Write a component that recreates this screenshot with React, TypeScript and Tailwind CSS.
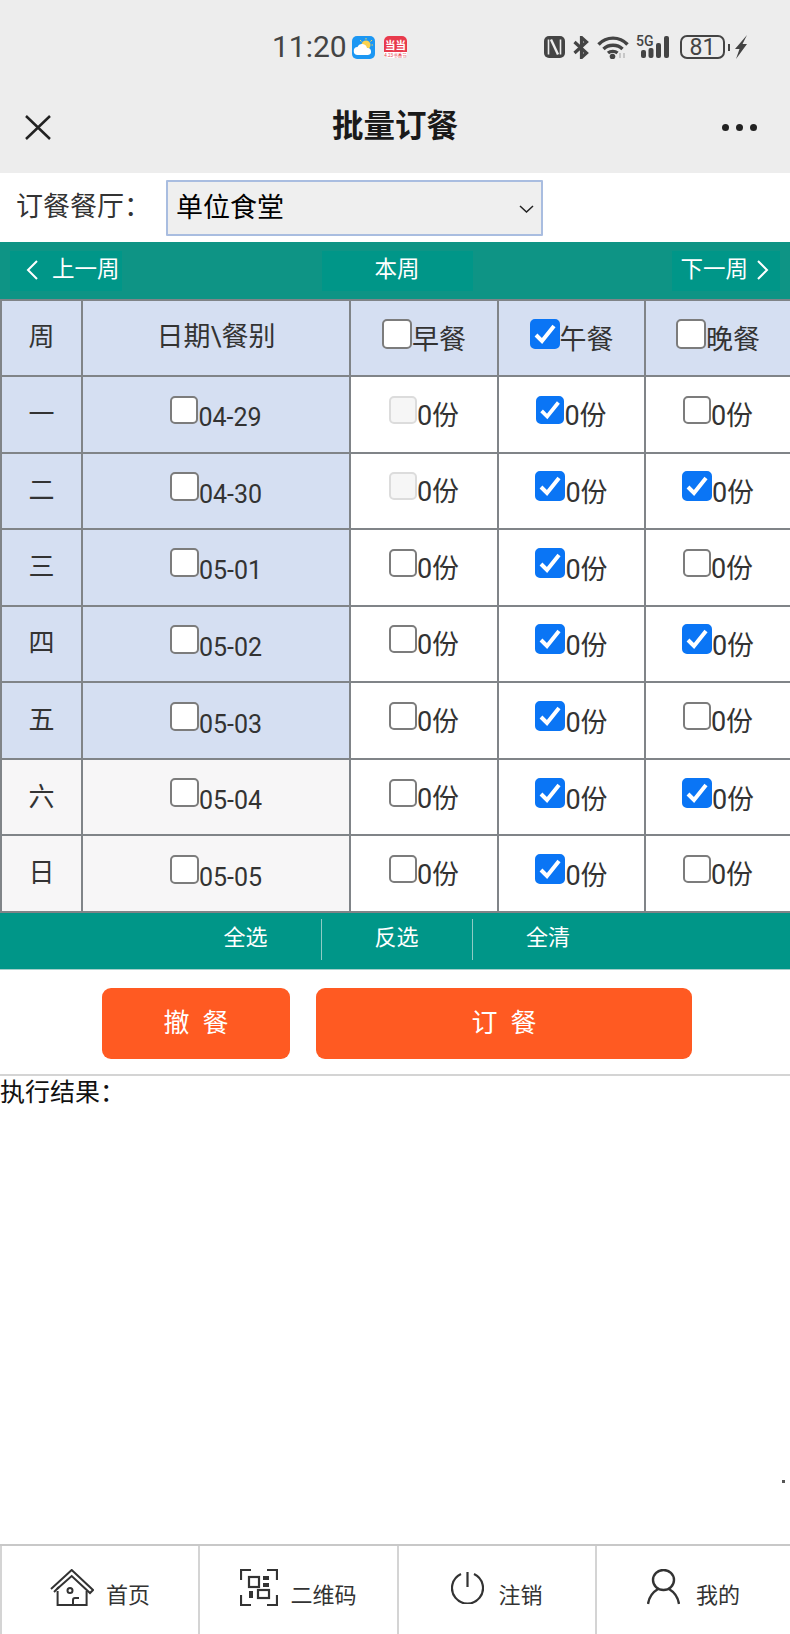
const days = [
  { week: "一", date: "04-29", tint: true, off: true, lunch: true, dinner: false },
  { week: "二", date: "04-30", tint: true, off: true, lunch: true, dinner: true },
  { week: "三", date: "05-01", tint: true, off: false, lunch: true, dinner: false },
  { week: "四", date: "05-02", tint: true, off: false, lunch: true, dinner: true },
  { week: "五", date: "05-03", tint: true, off: false, lunch: true, dinner: false },
  { week: "六", date: "05-04", tint: false, off: false, lunch: true, dinner: true },
  { week: "日", date: "05-05", tint: false, off: false, lunch: true, dinner: false },
];

// size is one of the three box sizes seen in the table
const Box = ({ checked = false, disabled = false, size = "h-[28px] w-[28px]" }: { checked?: boolean; disabled?: boolean; size?: string }) => (
  <span className={`relative mb-[9px] block shrink-0 ${size}`}>
    <input
      type="checkbox"
      checked={checked}
      disabled={disabled}
      readOnly
      className="block h-full w-full appearance-none rounded-[5px] border-2 border-[#7c7c7c] bg-white checked:border-[#0a75f5] checked:bg-[#0a75f5] disabled:border-[#dcdcdc] disabled:bg-[#f6f6f6]"
    />
    {checked && (
      <svg className="absolute inset-0 h-full w-full" viewBox="0 0 30 30" fill="none" stroke="#fff" strokeWidth="4">
        <path d="M6 16l6 6L24 7" />
      </svg>
    )}
  </span>
);

const MealCell = ({ checked = false, disabled = false, small = false }: { checked?: boolean; disabled?: boolean; small?: boolean }) => (
  <td className="border-2 border-[#808488] p-0">
    <div className="flex items-end justify-center text-[27px] leading-[34px] text-[#333]">
      <Box checked={checked} disabled={disabled} size={checked && !small ? "h-[30px] w-[30px]" : "h-[28px] w-[28px]"} />
      <span>0份</span>
    </div>
  </td>
);

const HeadMeal = ({ label, checked = false }: { label: string; checked?: boolean }) => (
  <th className="border-2 border-[#808488] p-0 font-normal">
    <div className="flex items-end justify-center text-[27px] leading-[34px] text-[#333]">
      <Box checked={checked} size="h-[30px] w-[30px]" />
      <span className="mb-[1px]">{label}</span>
    </div>
  </th>
);

const Chevron = ({ right = false }: { right?: boolean }) => (
  <svg width="13" height="20" viewBox="0 0 13 20" fill="none" stroke="#fff" strokeWidth="2">
    <path d={right ? "M2 1l9 9-9 9" : "M11 1l-9 9 9 9"} />
  </svg>
);

const StatusIcons = () => (
  <div className="ml-auto flex items-center pr-[43px] text-[#444]">
    {/* nfc */}
    <svg width="21" height="22" viewBox="0 0 21 22">
      <rect x="0" y="0" width="21" height="22" rx="5" fill="#444" />
      <path d="M4.500 3.500v15M16.500 3.500v15" stroke="#ededed" strokeWidth="1.600" fill="none" />
      <path d="M7 3.500l7 15" stroke="#ededed" strokeWidth="2.400" fill="none" />
    </svg>
    <svg className="ml-[8px]" width="16" height="23" viewBox="0 0 16 23" fill="none" stroke="#444" strokeWidth="3.200">
      <path d="M1.500 6l12 11-5 4.500V1.500l5 4.500-12 11" />
    </svg>
    <svg className="ml-[8px]" width="32" height="23" viewBox="0 0 32 23" fill="none" stroke="#444" strokeWidth="3.400">
      <path d="M1.500 8.500c8-8.500 21-8.500 29 0M6.500 13c5-5 14-5 19 0M11 17c2.500-2.200 7-2.200 9.500 0" />
      <circle cx="15.500" cy="20.500" r="2.800" fill="#444" stroke="none" />
      <path d="M23 17v5M27 17v5" stroke="#bbb" strokeWidth="1.500" />
    </svg>
    <div className="relative ml-[7px] h-[23px] w-[36px]">
      <span className="absolute left-0 top-[-2px] text-[14px] font-medium leading-[14px]">5G</span>
      <svg className="absolute left-[5px] top-0" width="31" height="23" viewBox="0 0 31 23" fill="#444">
        <rect x="0" y="14" width="5" height="8" rx="2" />
        <rect x="7.500" y="12" width="5" height="10" rx="2" />
        <rect x="15" y="7" width="5" height="15" rx="2" />
        <rect x="23" y="0" width="5" height="22" rx="2" />
      </svg>
    </div>
    <div className="ml-[8px] flex h-[24px] w-[45px] items-center justify-center rounded-[7px] border-2 border-[#444] text-[23px] leading-none">81</div>
    <div className="ml-[3px] h-[7px] w-[2px] bg-[#444]" />
    <svg className="ml-[5px]" width="12" height="24" viewBox="0 0 12 24" fill="#444">
      <path d="M12 0L0 14h4.500L1 24l11-15H7.500z" />
    </svg>
  </div>
);

const HomeIcon = () => (
  <svg width="44" height="37" viewBox="0 0 44 37" fill="none" stroke="#333" strokeWidth="2">
    <path d="M1 20L21.700 1 43 21l-3 3L21.700 7 7 20" />
    <path d="M4 23l5-5" />
    <path d="M7.600 22v14h29V22" />
    <circle cx="20" cy="21.500" r="2.500" />
    <path d="M23 36v-5q0-2 2-2h4" />
  </svg>
);

const QrIcon = () => (
  <svg width="38" height="37" viewBox="0 0 38 37" fill="none" stroke="#333" strokeWidth="2.200">
    <path d="M1 11V1h10M27 1h10v10M1 26v10h10M27 36h10V26" />
    <rect x="9" y="8" width="10" height="10" />
    <rect x="18" y="21" width="11" height="8" />
    <rect x="23" y="7" width="6" height="4" fill="#333" stroke="none" />
    <rect x="23" y="14" width="6" height="4" fill="#333" stroke="none" />
    <rect x="9" y="22" width="4" height="7" fill="#333" stroke="none" />
  </svg>
);

const PowerIcon = () => (
  <svg width="33" height="33" viewBox="0 0 33 33" fill="none" stroke="#333" strokeWidth="2.200">
    <path d="M10 3a15.500 15.500 0 1 0 13 0" />
    <path d="M16.500 1v15" />
  </svg>
);

const PersonIcon = () => (
  <svg width="33" height="36" viewBox="0 0 33 36" fill="none" stroke="#333" strokeWidth="2.400">
    <ellipse cx="16.500" cy="11" rx="10.500" ry="10" />
    <path d="M1 35c1-7 5-12 10-15M32 35c-1-7-5-12-10-15" />
  </svg>
);

const NavItem = ({ icon, label, className }: { icon: React.ReactNode; label: string; className: string }) => (
  <div className={`flex items-center justify-center border-[#d4d4d4] pb-[6px] ${className}`}>
    {icon}
    <span className="mt-[17px] text-[22px] leading-[26px] text-[#333]">{label}</span>
  </div>
);

export default function App() {
  return (
    <div className="flex h-[1634px] w-[790px] flex-col overflow-hidden bg-white font-['Roboto','Noto_Sans_CJK_SC',sans-serif]">
      <header className="h-[173px] bg-[#ededed]">
        <div className="flex h-[94px] items-center pl-[272px]">
          <span className="text-[30px] leading-none text-[#444]">11:20</span>
          <svg className="ml-[5px]" width="23" height="23" viewBox="0 0 23 23">
            <rect width="23" height="23" rx="5" fill="#1c97f3" />
            <circle cx="14" cy="9" r="4.500" fill="#fbd24e" />
            <path d="M14 2v1.500M20 4l-1.500 1.500M21 9h-1.500M8 4l1.500 1.500" stroke="#fbd24e" strokeWidth="1" />
            <path d="M6 19a4 4 0 0 1-.500-8 5 5 0 0 1 9.500 1 3.500 3.500 0 0 1 1 7z" fill="#fff" />
          </svg>
          <svg className="ml-[9px]" width="23" height="22" viewBox="0 0 23 22">
            <rect width="23" height="22" rx="5" fill="#fff" />
            <path d="M5 0h13a5 5 0 0 1 5 5v11H0V5a5 5 0 0 1 5-5z" fill="#e83a4c" />
            <text x="11.500" y="12.500" textAnchor="middle" fontSize="10.500" fontWeight="700" fill="#fff">当当</text>
            <text x="11.500" y="20.500" textAnchor="middle" fontSize="4.500" fill="#e83a4c">4.23书香节</text>
          </svg>
          <StatusIcons />
        </div>
        <div className="grid h-[66px] grid-cols-[1fr_auto_1fr] items-center px-[33px]">
          <svg className="ml-[-8px]" width="26" height="25" viewBox="0 0 26 25" fill="none" stroke="#222" strokeWidth="2.500">
            <path d="M1 1l24 23M25 1L1 24" />
          </svg>
          <h1 className="text-[31.5px] font-bold leading-none text-[#1a1a1a]">批量订餐</h1>
          <div className="flex justify-end gap-[7px]">
            <div className="h-[7px] w-[7px] rounded-full bg-[#222]" />
            <div className="h-[7px] w-[7px] rounded-full bg-[#222]" />
            <div className="h-[7px] w-[7px] rounded-full bg-[#222]" />
          </div>
        </div>
      </header>

      <div className="flex h-[69px] items-center pl-[16px]">
        <label className="w-[150px] text-[27px] leading-none text-[#333]">订餐餐厅：</label>
        <div className="relative">
          <select className="h-[56px] w-[377px] appearance-none rounded-[1px] border-2 border-[#a9bde0] bg-[#efefef] pl-[8px] pt-[2px] text-[27px] text-black">
            <option>单位食堂</option>
          </select>
          <svg className="absolute right-[9px] top-[25px]" width="15" height="8" viewBox="0 0 15 8" fill="none" stroke="#222" strokeWidth="1.500">
            <path d="M1 1l6.500 6L14 1" />
          </svg>
        </div>
      </div>

      <div className="flex h-[57px] items-center justify-between bg-[#0e9485] text-[22.5px] leading-none text-white">
        <button className="ml-[10px] flex h-[40px] w-[112px] items-center gap-[13px] bg-[#009688] pb-[2px] pl-[16px]">
          <Chevron />
          <span>上一周</span>
        </button>
        <button className="h-[40px] w-[151px] bg-[#009688] pb-[2px]">本周</button>
        <button className="mr-[10px] flex h-[40px] w-[108px] items-center justify-end gap-[8px] bg-[#009688] pb-[2px] pr-[11px]">
          <span>下一周</span>
          <Chevron right />
        </button>
      </div>

      <table className="h-[614px] w-[790px] table-fixed border-collapse text-center">
        <colgroup>
          <col className="w-[81px]" />
          <col className="w-[268px]" />
          <col className="w-[148px]" />
          <col className="w-[147px]" />
          <col className="w-[146px]" />
        </colgroup>
        <thead>
          <tr className="h-[76px] bg-[#d5dff2]">
            <th className="border-2 border-[#808488] p-0 pb-[2px] text-[26px] font-normal text-[#333]">周</th>
            <th className="border-2 border-[#808488] p-0 pb-[2px] text-[27px] font-normal text-[#333]">日期\餐别</th>
            <HeadMeal label="早餐" />
            <HeadMeal label="午餐" checked />
            <HeadMeal label="晚餐" />
          </tr>
        </thead>
        <tbody>
          {days.map((d, i) => (
            <tr key={d.date} className="h-[76px]">
              <td className={`border-2 border-[#808488] p-0 text-[26px] text-[#333] ${d.tint ? "bg-[#d5dff2]" : "bg-[#f7f6f7]"}`}>{d.week}</td>
              <td className={`border-2 border-[#808488] p-0 ${d.tint ? "bg-[#d5dff2]" : "bg-[#f7f6f7]"}`}>
                <div className="flex items-end justify-center text-[25px] leading-[30px] text-[#333]">
                  <Box size={i === 0 ? "h-[28px] w-[28px]" : "h-[29px] w-[29px]"} />
                  <span>{d.date}</span>
                </div>
              </td>
              <MealCell disabled={d.off} />
              <MealCell checked={d.lunch} small={i === 0} />
              <MealCell checked={d.dinner} />
            </tr>
          ))}
        </tbody>
      </table>

      <div className="flex h-[57px] items-center justify-center border-b border-[#a5cfca] bg-[#009688] pb-[4px] pl-[4px] text-[22px] text-white">
        <div className="flex h-[41px] w-[151px] items-center justify-center border-r border-[#8fcbc4] pb-[3px]">全选</div>
        <div className="flex h-[41px] w-[151px] items-center justify-center border-r border-[#8fcbc4] pb-[3px]">反选</div>
        <div className="flex h-[41px] w-[151px] items-center justify-center pb-[3px]">全清</div>
      </div>

      <div className="flex h-[106px] gap-[26px] border-b-2 border-[#d4d4d4] pl-[102px] pt-[18px]">
        <button className="flex h-[71px] w-[188px] items-center justify-center gap-[13px] rounded-[9px] bg-[#ff5a22] text-[26px] text-white">
          <span>撤</span>
          <span>餐</span>
        </button>
        <button className="flex h-[71px] w-[376px] items-center justify-center gap-[13px] rounded-[9px] bg-[#ff5a22] text-[26px] text-white">
          <span>订</span>
          <span>餐</span>
        </button>
      </div>

      <main className="relative flex-1">
        <p className="text-[25px] leading-[34px] text-[#111]">执行结果：</p>
        <div className="absolute left-[782px] top-[404px] h-[3px] w-[3px] bg-[#555]" />
      </main>

      <nav className="grid h-[90px] grid-cols-[200px_199px_198px_193px] border-t-2 border-[#c8c8c8]">
        <NavItem className="gap-[12px] border-x-2" icon={<HomeIcon />} label="首页" />
        <NavItem className="gap-[12px] border-r-2" icon={<QrIcon />} label="二维码" />
        <NavItem className="gap-[14px] border-r-2" icon={<PowerIcon />} label="注销" />
        <NavItem className="gap-[16px]" icon={<PersonIcon />} label="我的" />
      </nav>
    </div>
  );
}
